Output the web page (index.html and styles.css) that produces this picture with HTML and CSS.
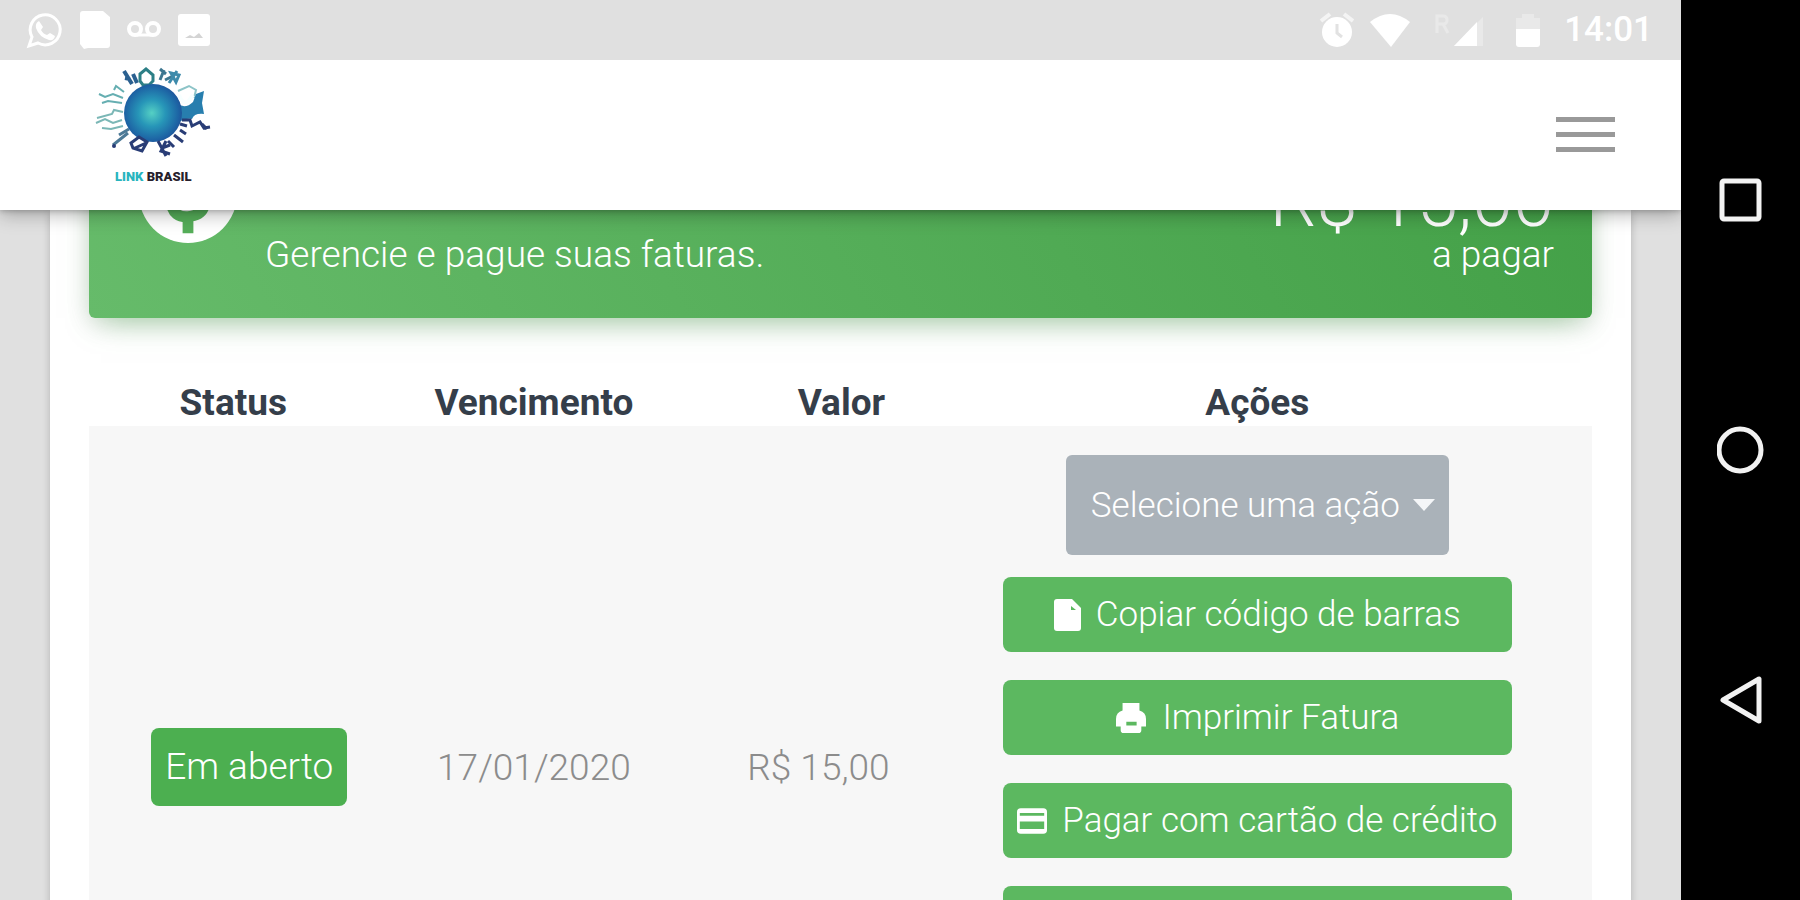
FILE: index.html
```
<!DOCTYPE html>
<html lang="pt-BR">
  <head>
    <meta charset="utf-8">
    <meta name="viewport" content="width=device-width, initial-scale=1">
    <title>Faturas</title>
    <link rel="stylesheet" href="styles.css">
  </head>
  <body>
    <div class="app">
      <div class="statusbar">
        <div class="status-left">
          <svg width="38" height="38" viewBox="0 0 38 38">
            <path d="M3 35l3-9a15 15 0 1 1 6 6z" fill="none" stroke="#fff" stroke-width="3"/>
            <path d="M13 10l4 6-2 3q2 4 6 5l3-2 5 3q-1 5-6 4-10-3-13-12-1-5 3-7z" fill="#fff"/>
          </svg>
          <svg width="30" height="38" viewBox="0 0 30 38">
            <path d="M3 0h20l7 6v28q0 3-3 3H8l-4 1-4-5V3q0-3 3-3z" fill="#fff"/>
          </svg>
          <svg width="36" height="20" viewBox="0 0 36 20">
            <circle cx="9" cy="9" r="6" fill="none" stroke="#fff" stroke-width="4"/>
            <circle cx="27" cy="9" r="6" fill="none" stroke="#fff" stroke-width="4"/>
            <path d="M9 15h18" stroke="#fff" stroke-width="3"/>
          </svg>
          <svg width="32" height="32" viewBox="0 0 32 32">
            <rect width="32" height="32" rx="3" fill="#fff"/>
            <path d="M7 24l5-3 4 2 5-4 4 5z" fill="#d4d4d4"/>
          </svg>
        </div>
        <div class="status-right">
          <svg width="38" height="36" viewBox="0 0 38 36">
            <circle cx="21" cy="20" r="15" fill="#fff"/>
            <path d="M5 9l9-7M37 9l-9-7" stroke="#f4f4f4" stroke-width="4"/>
            <path d="M21 12v9l5 4" fill="none" stroke="#e2e2e2" stroke-width="3"/>
          </svg>
          <svg width="40" height="33" viewBox="0 0 40 33">
            <path d="M0 8q20-16 40 0L21 33z" fill="#fff"/>
          </svg>
          <svg class="signal" width="50" height="34" viewBox="0 0 50 34">
            <path d="M3 20V3h6q4 0 4 4t-4 4H3M9 11l5 9" fill="none" stroke="#e9e9e9" stroke-width="3"/>
            <path d="M20 33L49 4v29z" fill="#e9e9e9"/>
            <path d="M20 33L43 9v24z" fill="#fff"/>
          </svg>
          <svg class="battery" width="24" height="34" viewBox="0 0 24 34">
            <path d="M0 5h6V1h12v4h6v13H0z" fill="#e9e9e9"/>
            <path d="M0 16h24v15q0 3-3 3H3q-3 0-3-3z" fill="#fff"/>
          </svg>
          <span class="clock">14:01</span>
        </div>
      </div>

      <header class="header">
        <a class="logo" href="#" aria-label="Link Brasil">
          <svg width="130" height="126" viewBox="0 0 130 126">
            <defs>
              <radialGradient id="globe" cx="48%" cy="50%" r="58%">
                <stop offset="0" stop-color="#55d0c4"/>
                <stop offset="0.4" stop-color="#2796b8"/>
                <stop offset="0.8" stop-color="#1d63a4"/>
                <stop offset="1" stop-color="#204891"/>
              </radialGradient>
            </defs>
            <g fill="none" stroke-width="2">
              <path d="M44 24l-8-13M42 19l-5-1M49 23l-4-9" stroke="#2b6090" stroke-width="4"/>
              <path d="M52 21v-7l6-5 7 6v6l-4 4h-6z" stroke="#2c7f86" stroke-width="3"/>
              <path d="M72 20l4-10M72 9l6 5M77 20l8-4" stroke="#3d7791" stroke-width="3"/>
              <path d="M81 23l8-12M83 13l8 2-3 7z" stroke="#3d8aab" stroke-width="3"/>
              <path d="M90 31l11-5 7 4-2 8" stroke="#8dc4c8"/>
              <path d="M36 32l-8-6-2 4M35 38l-10-4-8 3-6-3M34 43l-14-2-6 2" stroke="#65aeb1"/>
              <path d="M35 52l-9-2-2 4-15 4M34 60l-9 3-8-4-9 4M35 66l-12 3-9-1" stroke="#7bb7b6"/>
              <path d="M40 73l-15 12M41 69l-10 6" stroke="#4c7996" stroke-width="3"/>
            </g>
            <path d="M88 43q9 7 17-1l3-8 8-3-2 12 2 11q-10-1-12 5-8-1-16 5z" fill="#277eae"/>
            <circle cx="65" cy="53" r="29" fill="url(#globe)"/>
            <path d="M91 35q3 9 9 7l5-7" fill="none" stroke="#f7ffff" stroke-width="4"/>
            <g fill="none" stroke="#293d76" stroke-width="3">
              <path d="M94 60h8l2 6 8-4 4 6 6-1M99 66l-7-2M114 64l5 5"/>
              <path d="M92 70l6 4M86 75l9 7M80 81l6 6"/>
              <path d="M43 83l8-6 8 5-5 9-9-3zM47 88l11-5"/>
              <path d="M70 81l8 15M78 81l-5 10 9 3M82 85l-8 3"/>
            </g>
            <circle cx="26" cy="86" r="2" fill="#293d76"/>
            <text class="logo-name" x="27" y="121"><tspan fill="#28b4be">LINK</tspan> <tspan fill="#27202c">BRASIL</tspan></text>
          </svg>
        </a>
        <button class="menu" type="button" aria-label="Menu">
          <span></span>
          <span></span>
          <span></span>
        </button>
      </header>

      <main class="content">
        <section class="card">
          <div class="banner">
            <svg class="coin" width="98" height="98" viewBox="0 0 100 100">
              <circle cx="50" cy="50" r="50" fill="#fff"/>
              <path d="M67 30q-2-12-17-12t-17 12 17 15 17 15-17 13-17-13M50 8v10M50 76v14" fill="none" stroke="#55ae59" stroke-width="11"/>
            </svg>
            <div class="banner-text">Gerencie e pague suas faturas.</div>
            <div class="total">
              <strong>R$ 15,00</strong>
              <span>a pagar</span>
            </div>
          </div>

          <table class="invoices">
            <thead>
              <tr>
                <th class="status">Status</th>
                <th class="due">Vencimento</th>
                <th class="value">Valor</th>
                <th class="actions">Ações</th>
              </tr>
            </thead>
            <tbody>
              <tr>
                <td class="status"><span class="badge">Em aberto</span></td>
                <td class="due">17/01/2020</td>
                <td class="value">R$ 15,00</td>
                <td class="actions">
                  <div class="action-list">
                    <div class="picker">
                      <select aria-label="Selecione uma ação">
                        <option>Selecione uma ação</option>
                      </select>
                      <svg width="22" height="12" viewBox="0 0 22 12"><path d="M0 0h22L11 12z" fill="#f4f6f8"/></svg>
                    </div>
                    <button class="btn" type="button">
                      <svg width="27" height="32" viewBox="0 0 27 32"><path d="M3 0h15l9 9v20q0 3-3 3H3q-3 0-3-3V3q0-3 3-3z" fill="#fff"/><path d="M17 7v4h5z" fill="#5cb860"/></svg>
                      Copiar código de barras
                    </button>
                    <button class="btn" type="button">
                      <svg width="32" height="30" viewBox="0 0 32 32"><path d="M7 0h18v8q7 2 7 9v8h-5v4q0 3-3 3H8q-3 0-3-3v-4H0v-8q0-7 7-9z" fill="#fff"/><path d="M11 20h11v4H11z" fill="#5cb860"/></svg>
                      Imprimir Fatura
                    </button>
                    <button class="btn" type="button">
                      <svg width="30" height="26" viewBox="0 0 32 27"><rect width="32" height="27" rx="4" fill="#fff"/><path d="M3 5h26v3H3zM3 14h26v8H3z" fill="#5cb860"/></svg>
                      Pagar com cartão de crédito
                    </button>
                    <button class="btn" type="button">Pagar com boleto</button>
                    <button class="btn" type="button">Enviar por e-mail</button>
                  </div>
                </td>
              </tr>
            </tbody>
          </table>
        </section>
      </main>
    </div>

    <nav class="navbar">
      <button type="button" aria-label="Recentes">
        <svg width="48" height="50" viewBox="0 0 48 50"><rect x="5" y="6" width="37" height="38" rx="2"/></svg>
      </button>
      <button type="button" aria-label="Início">
        <svg width="48" height="50" viewBox="0 0 48 50"><circle cx="23" cy="25" r="21"/></svg>
      </button>
      <button type="button" aria-label="Voltar">
        <svg width="48" height="50" viewBox="0 0 48 50"><path d="M42 4v42L6 25z"/></svg>
      </button>
    </nav>
  </body>
</html>
```

FILE: styles.css
```
* {
  box-sizing: border-box;
}
body {
  margin: 0;
  height: 100vh;
  display: flex;
  overflow: hidden;
  font-family: Roboto, "Liberation Sans", sans-serif;
  font-size: 37px;
  font-weight: 300;
  color: #8c8c8c;
  background: #e0e0e0;
}
button, select {
  font: inherit;
  border: 0;
  cursor: pointer;
}
svg {
  flex: none;
}

.app {
  flex: 1;
  display: flex;
  flex-direction: column;
  min-width: 0;
}

/* barra de status */
.statusbar {
  flex: none;
  position: relative;
  z-index: 3;
  height: 60px;
  padding: 0 28px 0 26px;
  display: flex;
  justify-content: space-between;
  align-items: center;
  background: #e0e0e0;
}
.status-left, .status-right {
  display: flex;
  align-items: center;
  gap: 16px;
}
.battery {
  margin: 0 8px 0 16px;
}
.signal {
  margin-left: 8px;
}
.clock {
  font-size: 35px;
  font-weight: 500;
  line-height: 40px;
  color: #fff;
}

/* topo */
.header {
  flex: none;
  position: relative;
  z-index: 2;
  height: 150px;
  padding: 0 66px 2px 88px;
  display: flex;
  justify-content: space-between;
  align-items: center;
  background: #fff;
  box-shadow: 0 4px 18px rgba(0, 0, 0, .3), 0 1px 5px rgba(0, 0, 0, .2);
}
.logo {
  align-self: flex-start;
}
.logo svg {
  display: block;
}
.logo-name {
  font-size: 13px;
  font-weight: 900;
}
.menu {
  padding: 0;
  width: 59px;
  display: flex;
  flex-direction: column;
  gap: 10px;
  background: none;
}
.menu span {
  height: 5px;
  background: #999;
}

/* faturas */
.content {
  flex: 1;
  min-height: 0;
  overflow: hidden;
  padding: 0 50px;
}
.card {
  padding: 0 39px 40px;
  background: #fff;
  box-shadow: 0 2px 8px rgba(0, 0, 0, .2);
}
.card::before {
  content: "";
  display: table;
}
.banner {
  height: 178px;
  margin-top: -70px;
  padding: 0 38px 36px 50px;
  display: flex;
  align-items: flex-end;
  border-radius: 6px;
  color: #fff;
  background: linear-gradient(60deg, #66bb6a, #43a047);
  box-shadow: 0 12px 30px -12px rgba(76, 175, 80, .5), 0 6px 24px rgba(0, 0, 0, .12);
}
.coin {
  margin-bottom: 39px;
}
.banner-text {
  flex: 1;
  padding-left: 28px;
  line-height: 54px;
}
.total {
  display: flex;
  flex-direction: column;
  text-align: right;
}
.total strong {
  font-size: 74px;
  font-weight: 300;
  line-height: 54px;
}
.total span {
  line-height: 54px;
}

.invoices {
  width: 100%;
  margin-top: 60px;
  border-collapse: collapse;
  table-layout: fixed;
  text-align: center;
}
.invoices th, .invoices td {
  padding: 0;
}
.invoices th {
  height: 48px;
  padding-top: 2px;
  line-height: 46px;
  font-weight: 700;
  color: #353e4a;
}
.invoices tbody tr {
  background: #f7f7f7;
}
.invoices .status {
  width: 18%;
  padding-left: 18px;
}
.invoices .due {
  width: 24%;
  padding-right: 12px;
}
.invoices .value {
  width: 14%;
  padding-left: 32px;
}
.invoices .actions {
  width: 44%;
  padding-right: 8px;
}
.invoices td.status {
  padding-left: 50px;
}
.invoices td.value {
  padding: 0 14px 0 0;
}
.badge {
  display: inline-block;
  padding: 0 14px;
  line-height: 78px;
  border-radius: 8px;
  color: #fff;
  background: #4caf50;
}
.action-list {
  padding: 29px 0 44px;
  display: flex;
  flex-direction: column;
  align-items: center;
  gap: 28px;
  font-size: 35px;
}
.picker {
  position: relative;
  margin-bottom: -6px;
}
.picker select {
  appearance: none;
  display: block;
  width: 383px;
  height: 100px;
  padding: 0 25px;
  border-radius: 6px;
  color: #fff;
  background: #aab2b9;
}
.picker svg {
  position: absolute;
  right: 14px;
  top: 44px;
  pointer-events: none;
}
.btn {
  width: 509px;
  height: 75px;
  padding: 0;
  display: flex;
  justify-content: center;
  align-items: center;
  gap: 15px;
  border-radius: 8px;
  color: #fff;
  background: #5cb860;
  white-space: nowrap;
}

/* navegação do aparelho */
.navbar {
  flex: none;
  width: 119px;
  padding: 75px 0;
  display: flex;
  flex-direction: column;
  background: #000;
}
.navbar button {
  flex: 1;
  padding: 0;
  display: flex;
  justify-content: center;
  align-items: center;
  background: none;
}
.navbar svg {
  fill: none;
  stroke: #f2f2f2;
  stroke-width: 5;
  stroke-linejoin: round;
}
```
